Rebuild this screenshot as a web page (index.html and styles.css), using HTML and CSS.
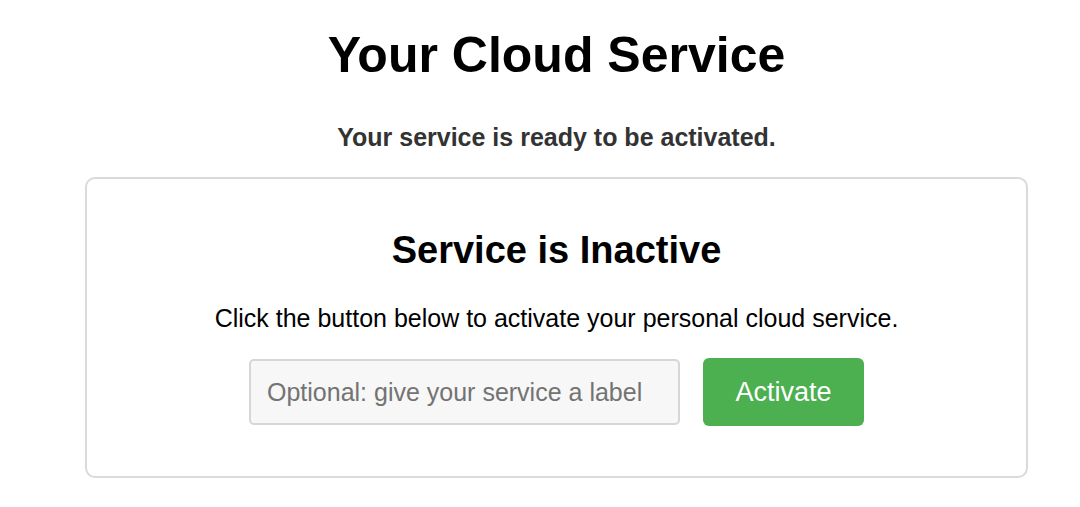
FILE: index.html
```html
<!DOCTYPE html>
<html lang="en">
<head>
<meta charset="utf-8">
<title>Your Cloud Service</title>
<link rel="stylesheet" href="styles.css">
</head>
<body>
<main class="page">
  <h1 class="title">Your Cloud Service</h1>
  <p class="subtitle">Your service is ready to be activated.</p>
  <section class="card">
    <h2 class="card-title">Service is Inactive</h2>
    <p class="card-text">Click the button below to activate your personal cloud service.</p>
    <form class="activate-form" onsubmit="return false;">
      <input class="label-input" type="text" placeholder="Optional: give your service a label">
      <button class="activate-btn" type="submit">Activate</button>
    </form>
  </section>
</main>
</body>
</html>
```

FILE: styles.css
```css
* { box-sizing: border-box; }

body {
  margin: 0;
  background: #ffffff;
  font-family: "Liberation Sans", Arial, Helvetica, sans-serif;
  color: #000;
}

.page {
  margin-left: 85px;
  width: 943px;
  text-align: center;
}

.title {
  margin: 25px 0 0;
  font-size: 50px;
  line-height: 60px;
  font-weight: 700;
  color: #000;
}

.subtitle {
  margin: 37px 0 0;
  font-size: 25px;
  line-height: 30px;
  font-weight: 700;
  color: #333;
}

.card {
  margin-top: 25px;
  border: 2px solid #dadada;
  border-radius: 10px;
  padding: 49px 20px 50px;
}

.card-title {
  margin: 0;
  font-size: 38px;
  line-height: 44px;
  font-weight: 700;
  color: #000;
}

.card-text {
  margin: 31px 0 0;
  font-size: 25px;
  line-height: 30px;
  color: #000;
}

.activate-form {
  margin-top: 25px;
  display: flex;
  justify-content: center;
  align-items: center;
  gap: 23px;
}

.label-input {
  width: 431px;
  height: 66px;
  padding: 0 16px;
  border: 2px solid #d6d6d6;
  border-radius: 5px;
  background: #f7f7f7;
  font-family: "Liberation Sans", Arial, sans-serif;
  font-size: 25px;
  color: #333;
}

.label-input::placeholder {
  color: #737373;
}

.activate-btn {
  width: 161px;
  height: 68px;
  border: none;
  border-radius: 6px;
  background: #4caf50;
  color: #fff;
  font-family: "Liberation Sans", Arial, sans-serif;
  font-size: 27px;
  cursor: pointer;
}
```
